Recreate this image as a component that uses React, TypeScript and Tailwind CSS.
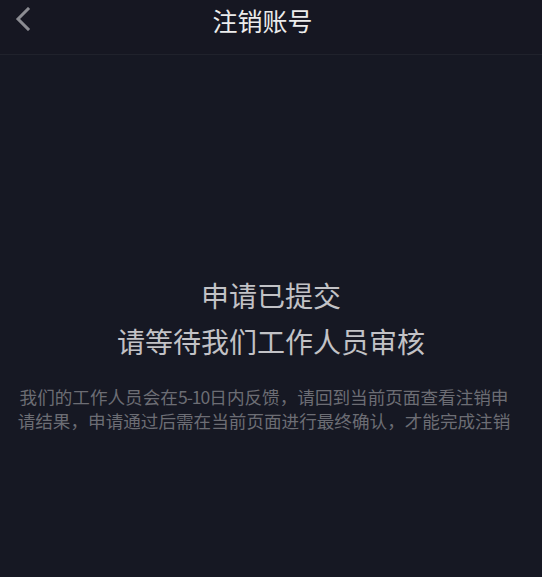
function BackIcon() {
  return (
    <svg width="16" height="24" viewBox="0 0 16 24" fill="none">
      <polyline
        points="13,2 3,12 13,22"
        stroke="#8b8c92"
        strokeWidth="3"
        strokeLinecap="square"
        strokeLinejoin="miter"
      />
    </svg>
  );
}

function App() {
  return (
    <div
      className="w-[542px] h-[577px] bg-[#161823] flex flex-col overflow-hidden"
      style={{ fontFamily: '"Noto Sans CJK SC", "Noto Sans", sans-serif' }}
    >
      {/* Header */}
      <div className="relative h-[55px] flex items-start justify-center pr-[17px] border-b border-[#20222c] bg-[#161722]">
        <button className="absolute left-[15px] top-[7px]">
          <BackIcon />
        </button>
        <h1 className="mt-[2px] text-[25px] leading-[36px] text-[#ececec]">注销账号</h1>
      </div>

      {/* Content */}
      <div className="flex flex-col items-center pt-[217px]">
        <p className="text-[28px] leading-[46px] text-[#c2c2c6]">申请已提交</p>
        <p className="text-[28px] leading-[46px] text-[#c2c2c6]">请等待我们工作人员审核</p>
        <div className="mt-[21px] pr-[14px] text-[17.6px] leading-[24px] text-[#6c6d74] text-center whitespace-nowrap">
          <p>
            我们的工作人员会在<span className="tracking-[-1px]">5-10</span>日内反馈，请回到当前页面查看注销申
          </p>
          <p>请结果，申请通过后需在当前页面进行最终确认，才能完成注销</p>
        </div>
      </div>
    </div>
  );
}

export default App;
